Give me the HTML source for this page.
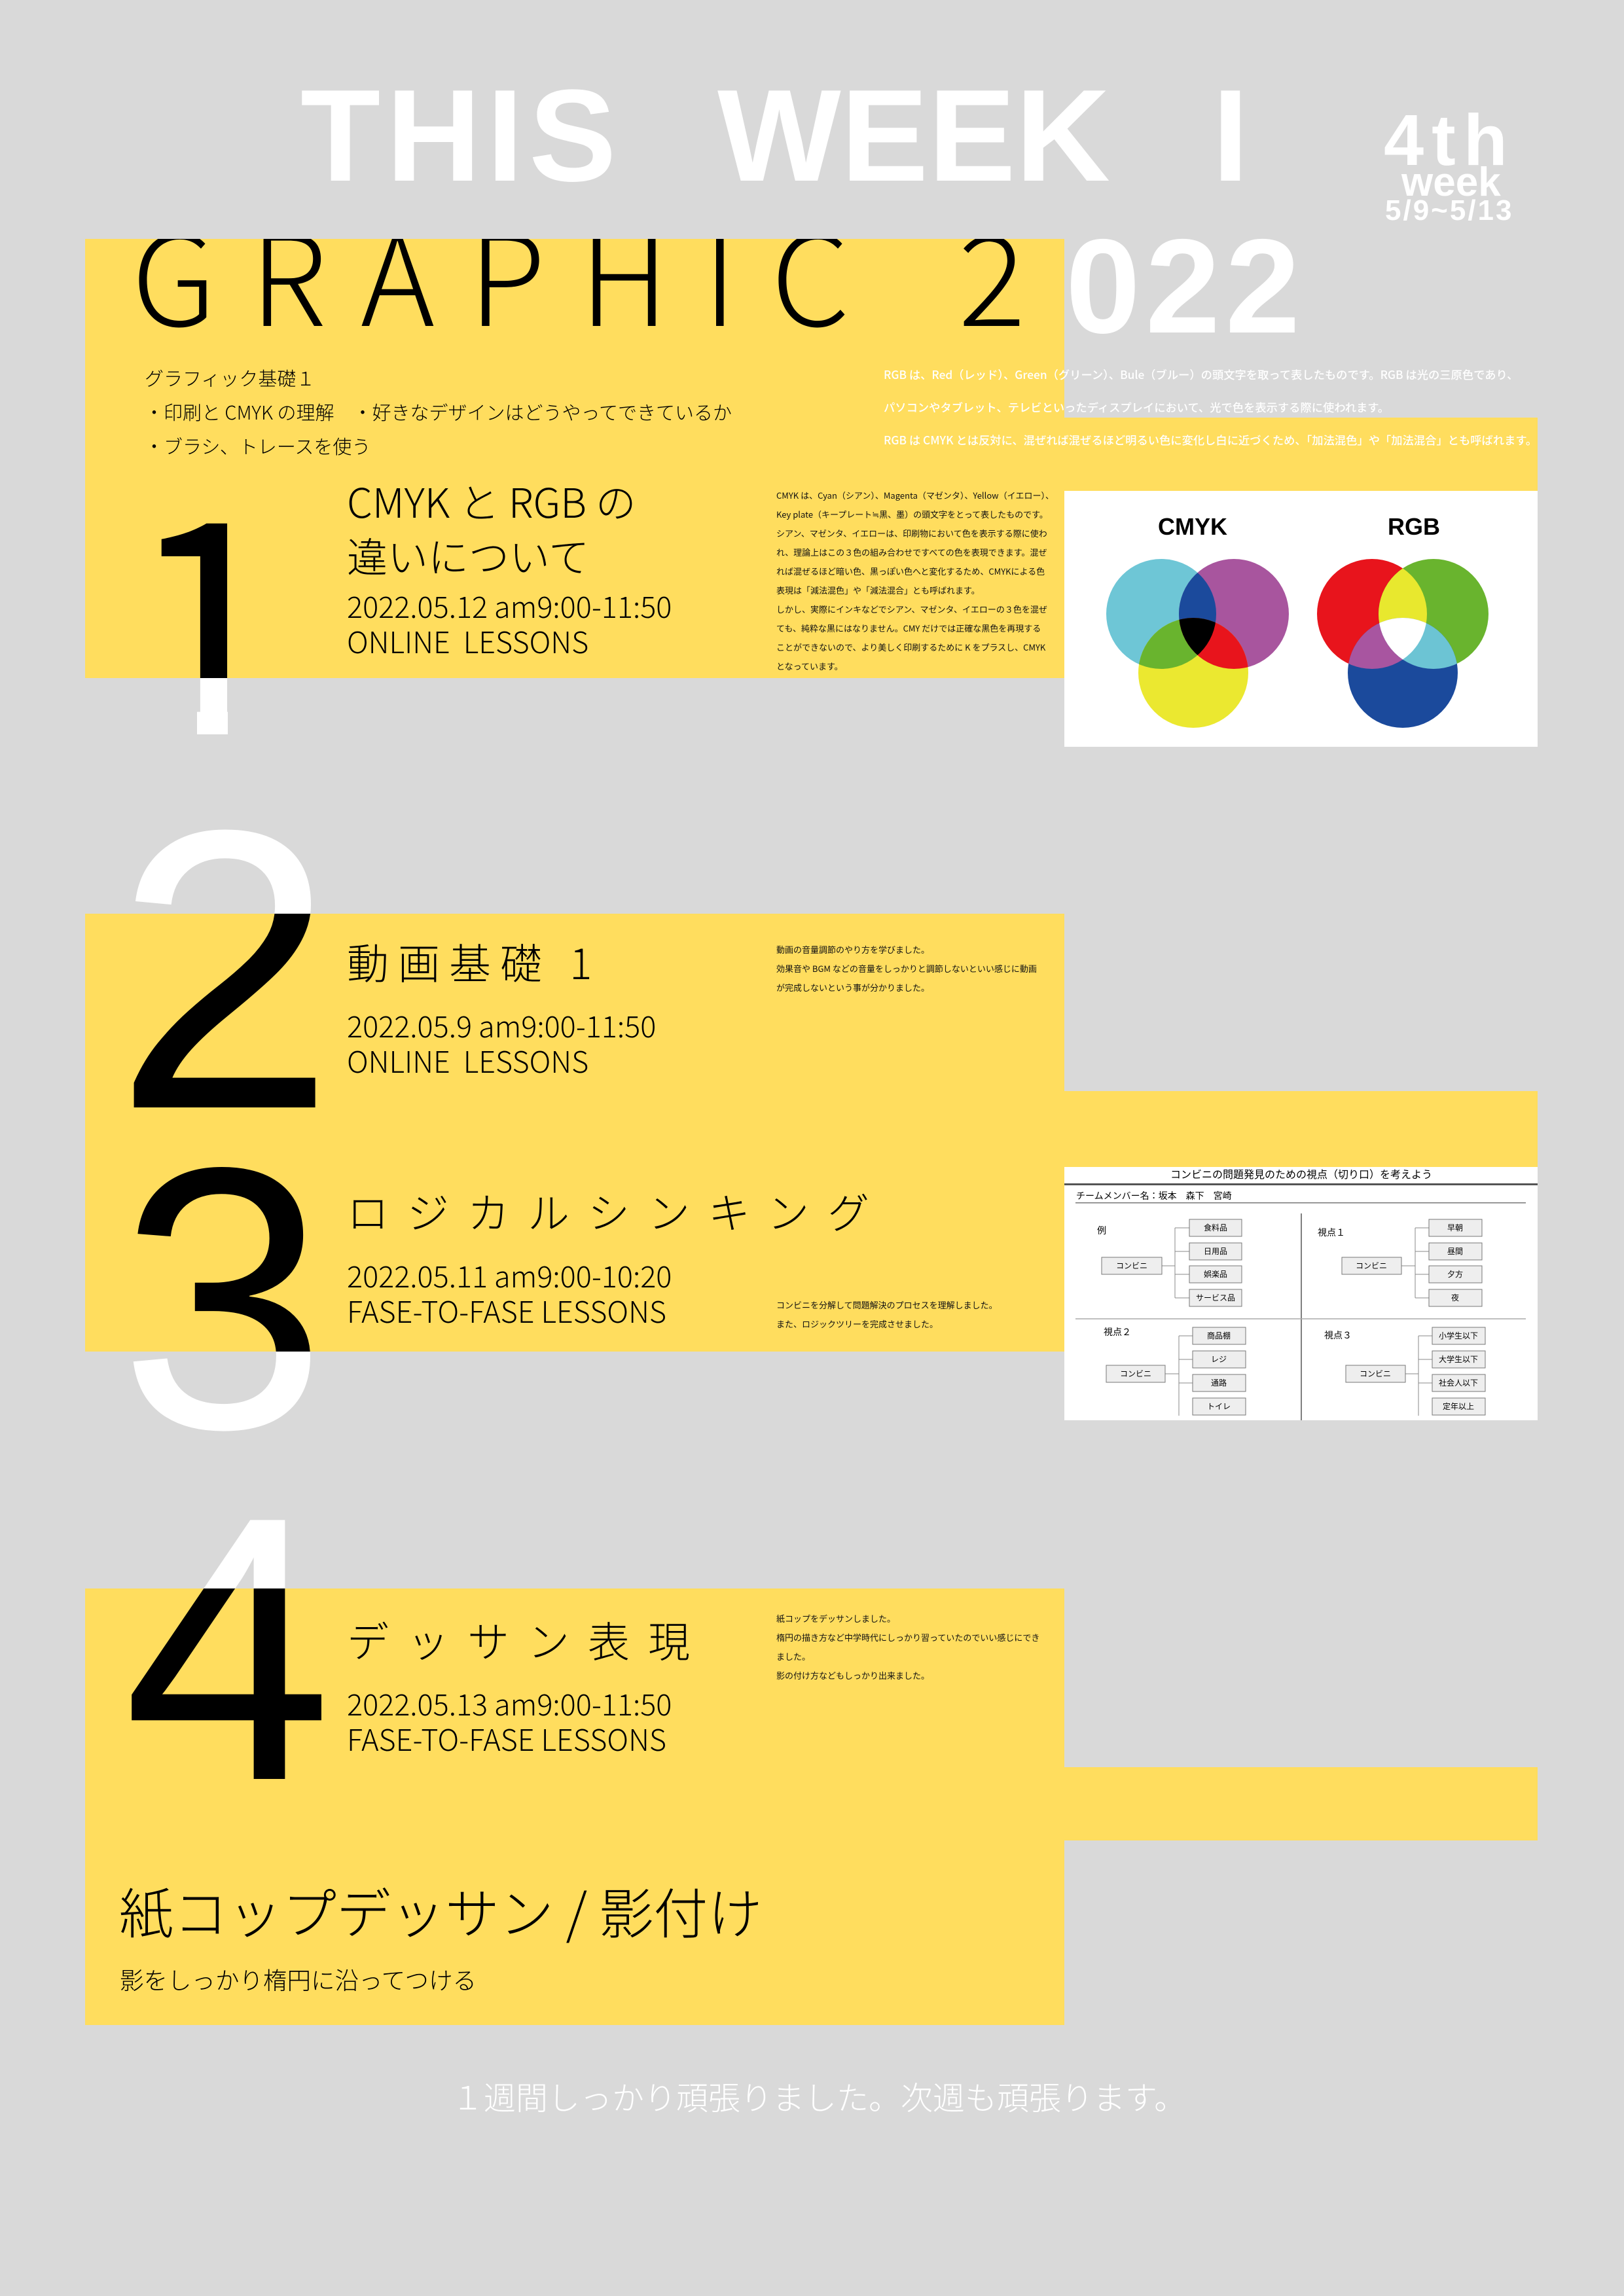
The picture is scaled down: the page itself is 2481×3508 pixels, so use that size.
<!DOCTYPE html>
<html><head><meta charset="utf-8">
<style>
*{margin:0;padding:0;box-sizing:border-box}
body{width:2481px;height:3508px;background:#d9d9d9;position:relative;overflow:hidden;font-family:"Liberation Sans","Noto Sans CJK JP",sans-serif}
.a{position:absolute;white-space:nowrap;line-height:1}
.y{position:absolute;background:#ffdd5e;overflow:hidden}
.num{position:absolute;font-family:"Liberation Sans",sans-serif;line-height:1;font-weight:400}
.one{position:absolute;font-family:"Noto Sans CJK JP",sans-serif;line-height:1;font-weight:400;width:260px;height:460px;clip-path:polygon(0 0,100% 0,100% 376px,156px 376px,156px 100%,109px 100%,109px 376px,0 376px)}
.j{font-family:"Noto Sans CJK JP",sans-serif;font-weight:300}
.sm{font-family:"Noto Sans CJK JP",sans-serif;font-size:13px;color:#111;position:absolute;white-space:nowrap;line-height:29px}
.h{font-family:"Noto Sans CJK JP",sans-serif;font-weight:300;font-size:64px;color:#000}
.d{font-family:"Noto Sans CJK JP",sans-serif;font-weight:300;font-size:45px;color:#000}
.w{color:#fff}
</style></head><body>

<!-- white numbers under panels -->
<div class="one w" style="left:192px;top:700px;font-size:452px">1</div>
<div class="num w" style="left:174px;top:1178px;font-size:608px">2</div>
<div class="num w" style="left:182px;top:1699px;font-size:570px">3</div>
<div class="num w" style="left:188px;top:2231px;font-size:575px">4</div>

<!-- header -->
<div class="a w" style="left:459px;top:108px;font-size:200px;font-weight:700;letter-spacing:9px">THIS</div>
<div class="a w" style="left:1096px;top:108px;font-size:200px;font-weight:700">WEEK</div>
<div class="a w" style="left:1852px;top:108px;font-size:200px;font-weight:700">I</div>
<div class="a w" style="left:2114px;top:160px;font-size:110px;font-weight:700;letter-spacing:12px">4th</div>
<div class="a w" style="left:2141px;top:248px;font-size:62px;font-weight:700">week</div>
<div class="a w" style="left:2116px;top:300px;font-size:44px;font-weight:700;letter-spacing:3px">5/9~5/13</div>
<div class="a w" style="left:1628px;top:335px;font-size:205px;font-weight:700;letter-spacing:8px">022</div>

<!-- side strips and images -->
<div class="y" style="left:1626px;top:638px;width:723px;height:112px"></div>
<div style="position:absolute;left:1626px;top:750px;width:723px;height:391px;background:#fff">
<svg width="723" height="391" viewBox="0 0 723 391">
<defs>
<clipPath id="cc"><circle cx="148" cy="188" r="84"/></clipPath>
<clipPath id="cm"><circle cx="259" cy="188" r="84"/></clipPath>
<clipPath id="rr"><circle cx="470" cy="188" r="84"/></clipPath>
<clipPath id="rg"><circle cx="564" cy="188" r="84"/></clipPath>
</defs>
<circle cx="148" cy="188" r="84" fill="#6ec6d6"/>
<circle cx="259" cy="188" r="84" fill="#a8559e"/>
<circle cx="197" cy="278" r="84" fill="#ebe830"/>
<circle cx="259" cy="188" r="84" fill="#1b4a9c" clip-path="url(#cc)"/>
<circle cx="197" cy="278" r="84" fill="#69b42e" clip-path="url(#cc)"/>
<circle cx="197" cy="278" r="84" fill="#e8141c" clip-path="url(#cm)"/>
<g clip-path="url(#cc)"><circle cx="197" cy="278" r="84" fill="#000" clip-path="url(#cm)"/></g>
<circle cx="470" cy="188" r="84" fill="#e8141c"/>
<circle cx="564" cy="188" r="84" fill="#69b42e"/>
<circle cx="517" cy="278" r="84" fill="#1b4a9c"/>
<circle cx="564" cy="188" r="84" fill="#e8e82e" clip-path="url(#rr)"/>
<circle cx="517" cy="278" r="84" fill="#a855a0" clip-path="url(#rr)"/>
<circle cx="517" cy="278" r="84" fill="#6cc4d4" clip-path="url(#rg)"/>
<g clip-path="url(#rr)"><circle cx="517" cy="278" r="84" fill="#fff" clip-path="url(#rg)"/></g>
<text x="196" y="67" font-family="Liberation Sans" font-weight="700" font-size="36" text-anchor="middle">CMYK</text>
<text x="534" y="67" font-family="Liberation Sans" font-weight="700" font-size="36" text-anchor="middle">RGB</text>
</svg></div>

<div class="y" style="left:1626px;top:1667px;width:723px;height:116px"></div>
<div style="position:absolute;left:1626px;top:1783px;width:723px;height:387px;background:#fff">
<svg width="723" height="387" viewBox="0 0 723 387" font-family="Noto Sans CJK JP" font-size="12">
<text x="362" y="17" font-size="16" text-anchor="middle">コンビニの問題発見のための視点（切り口）を考えよう</text>
<rect x="0" y="25" width="723" height="3" fill="#555"/>
<text x="18" y="49" font-size="14">チームメンバー名：坂本　森下　宮崎</text>
<rect x="17" y="54" width="688" height="1.5" fill="#777"/>
<line x1="362" y1="71" x2="362" y2="387" stroke="#555" stroke-width="1.5"/>
<line x1="17" y1="232" x2="705" y2="232" stroke="#aaa" stroke-width="1.5"/>
<g stroke="#888" fill="none">
<path d="M149 151H169M169 93V200M169 93H191M169 129H191M169 164H191M169 200H191"/>
<path d="M515 151H536M536 93V200M536 93H557M536 129H557M536 164H557M536 200H557"/>
<path d="M154 316H175M175 258V380M175 258H196M175 294H196M175 330H196"/>
<path d="M521 316H541M541 258V380M541 258H562M541 294H562M541 330H562"/>
</g>
<g fill="#eee" stroke="#777">
<rect x="57" y="138" width="92" height="26"/><rect x="424" y="138" width="91" height="26"/>
<rect x="64" y="303" width="90" height="26"/><rect x="430" y="303" width="91" height="26"/>
<rect x="191" y="80" width="80" height="26"/><rect x="191" y="116" width="80" height="26"/><rect x="191" y="151" width="80" height="26"/><rect x="191" y="187" width="80" height="26"/>
<rect x="557" y="80" width="81" height="26"/><rect x="557" y="116" width="81" height="26"/><rect x="557" y="151" width="81" height="26"/><rect x="557" y="187" width="81" height="26"/>
<rect x="196" y="245" width="81" height="26"/><rect x="196" y="281" width="81" height="26"/><rect x="196" y="317" width="81" height="26"/><rect x="196" y="353" width="81" height="26"/>
<rect x="562" y="245" width="81" height="26"/><rect x="562" y="281" width="81" height="26"/><rect x="562" y="317" width="81" height="26"/><rect x="562" y="353" width="81" height="26"/>
</g>
<g text-anchor="middle">
<text x="103" y="155">コンビニ</text><text x="469" y="155">コンビニ</text><text x="109" y="320">コンビニ</text><text x="475" y="320">コンビニ</text>
<text x="231" y="97">食料品</text><text x="231" y="133">日用品</text><text x="231" y="168">娯楽品</text><text x="231" y="204">サービス品</text>
<text x="597" y="97">早朝</text><text x="597" y="133">昼間</text><text x="597" y="168">夕方</text><text x="597" y="204">夜</text>
<text x="236" y="262">商品棚</text><text x="236" y="298">レジ</text><text x="236" y="334">通路</text><text x="236" y="370">トイレ</text>
<text x="602" y="262">小学生以下</text><text x="602" y="298">大学生以下</text><text x="602" y="334">社会人以下</text><text x="602" y="370">定年以上</text>
</g>
<text x="50" y="102" font-size="14">例</text><text x="387" y="105" font-size="14">視点１</text>
<text x="60" y="257" font-size="14">視点２</text><text x="397" y="262" font-size="14">視点３</text>
</svg></div>

<div class="y" style="left:1626px;top:2700px;width:723px;height:112px"></div>

<!-- Panel 1 -->
<div class="y" style="left:130px;top:365px;width:1496px;height:671px">
<div class="a" style="left:71px;top:-46px;font-family:'Noto Sans CJK JP',sans-serif;font-weight:200;font-size:192px;letter-spacing:52px;color:#000">GRAPHIC</div>
<div class="a" style="left:1334px;top:-46px;font-family:'Noto Sans CJK JP',sans-serif;font-weight:200;font-size:192px;color:#000">2</div>
<div class="one" style="left:62px;top:335px;font-size:452px;color:#000">1</div>
<div class="a j" style="left:91px;top:186px;font-size:29px;line-height:52px">グラフィック基礎１<br>・印刷と CMYK の理解　・好きなデザインはどうやってできているか<br>・ブラシ、トレースを使う</div>
<div class="a h" style="left:400px;top:358px;font-size:62px;line-height:83px">CMYK と RGB の<br>違いについて</div>
<div class="a d" style="left:400px;top:533px;line-height:54px">2022.05.12 am9:00-11:50<br>ONLINE&nbsp; LESSONS</div>
<div class="sm" style="left:1056px;top:377px">CMYK は、Cyan（シアン）、Magenta（マゼンタ）、Yellow（イエロー）、<br>Key plate（キープレート≒黒、墨）の頭文字をとって表したものです。<br>シアン、マゼンタ、イエローは、印刷物において色を表示する際に使わ<br>れ、理論上はこの３色の組み合わせですべての色を表現できます。混ぜ<br>れば混ぜるほど暗い色、黒っぽい色へと変化するため、CMYKによる色<br>表現は「減法混色」や「減法混合」とも呼ばれます。<br>しかし、実際にインキなどでシアン、マゼンタ、イエローの３色を混ぜ<br>ても、純粋な黒にはなりません。CMY だけでは正確な黒色を再現する<br>ことができないので、より美しく印刷するために K をプラスし、CMYK<br>となっています。</div>
</div>
<div class="a" style="left:1350px;top:547px;font-family:'Noto Sans CJK JP',sans-serif;font-size:17.3px;font-weight:500;line-height:50px;color:#fff">RGB は、Red（レッド）、Green（グリーン）、Bule（ブルー）の頭文字を取って表したものです。RGB は光の三原色であり、<br>パソコンやタブレット、テレビといったディスプレイにおいて、光で色を表示する際に使われます。<br>RGB は CMYK とは反対に、混ぜれば混ぜるほど明るい色に変化し白に近づくため、「加法混色」や「加法混合」とも呼ばれます。</div>

<!-- Panel 2/3 -->
<div class="y" style="left:130px;top:1396px;width:1496px;height:669px">
<div class="num" style="left:44px;top:-218px;font-size:608px;color:#000">2</div>
<div class="num" style="left:52px;top:303px;font-size:570px;color:#000">3</div>
<div class="a h" style="left:400px;top:41px;letter-spacing:14px">動画基礎 1</div>
<div class="a d" style="left:400px;top:143px;line-height:54px">2022.05.9 am9:00-11:50<br>ONLINE&nbsp; LESSONS</div>
<div class="sm" style="left:1056px;top:40px">動画の音量調節のやり方を学びました。<br>効果音や BGM などの音量をしっかりと調節しないといい感じに動画<br>が完成しないという事が分かりました。</div>
<div class="a h" style="left:400px;top:422px;letter-spacing:28px">ロジカルシンキング</div>
<div class="a d" style="left:400px;top:525px;line-height:54px">2022.05.11 am9:00-10:20<br>FASE-TO-FASE LESSONS</div>
<div class="sm" style="left:1056px;top:583px">コンビニを分解して問題解決のプロセスを理解しました。<br>また、ロジックツリーを完成させました。</div>
</div>

<!-- Panel 4 -->
<div class="y" style="left:130px;top:2427px;width:1496px;height:667px">
<div class="num" style="left:58px;top:-196px;font-size:575px;color:#000">4</div>
<div class="a h" style="left:400px;top:46px;letter-spacing:28px">デッサン表現</div>
<div class="a d" style="left:400px;top:148px;line-height:54px">2022.05.13 am9:00-11:50<br>FASE-TO-FASE LESSONS</div>
<div class="sm" style="left:1056px;top:31px">紙コップをデッサンしました。<br>楕円の描き方など中学時代にしっかり習っていたのでいい感じにでき<br>ました。<br>影の付け方などもしっかり出来ました。</div>
<div class="a j" style="left:52px;top:450px;font-size:83px;color:#000">紙コップデッサン / 影付け</div>
<div class="a j" style="left:53px;top:579px;font-size:36.5px;color:#000">影をしっかり楕円に沿ってつける</div>
</div>

<div class="a j w" style="left:690px;top:3178px;font-size:49px">１週間しっかり頑張りました。次週も頑張ります。</div>
</body></html>
